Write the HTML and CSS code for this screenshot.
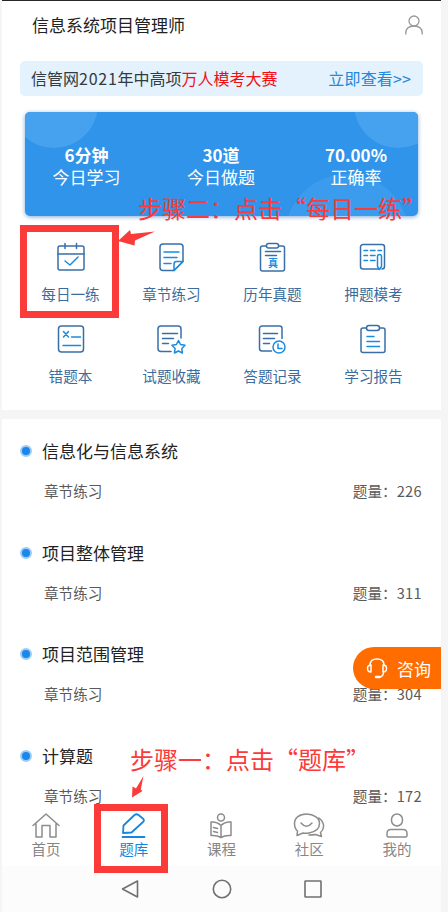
FILE: index.html
```html
<!DOCTYPE html>
<html lang="zh-CN">
<head>
<meta charset="utf-8">
<title>信息系统项目管理师</title>
<link rel="stylesheet" href="styles.css">
</head>
<body>
<div class="phone">
  <header class="header">
    <h1>信息系统项目管理师</h1>
    <svg class="user" width="20" height="20" viewBox="0 0 20 20"><circle cx="10" cy="6" r="5"/><path d="M1.800 19v-1Q2 11 10 11t8.200 7v1"/></svg>
  </header>
  <div class="banner"><span>信管网<i>2021</i>年中高项<b>万人模考大赛</b></span><a>立即查看&gt;&gt;</a></div>
  <section class="stats">
    <svg class="bubbles" width="393" height="104" viewBox="0 0 393 104"><circle cx="29" cy="-8" r="44"/><circle cx="373" cy="-8" r="44"/><circle cx="322" cy="124" r="62" opacity=".55"/></svg>
    <div><strong>6分钟</strong><span>今日学习</span></div>
    <div><strong>30道</strong><span>今日做题</span></div>
    <div><strong>70.00%</strong><span>正确率</span></div>
  </section>
  <nav class="tools">
    <div><svg width="30" height="32" viewBox="0 0 30 32"><rect x="2" y="4" width="26" height="24" rx="2"/><path d="M2 12h26M9 1.500v5M20.500 1.500v5"/><path class="hi" d="m9 19 5 4 8-8"/></svg><span>每日一练</span></div>
    <div><svg width="30" height="32" viewBox="0 0 30 32"><path d="M17 28.500H6a3 3 0 0 1-3-3V5a3 3 0 0 1 3-3h17a3 3 0 0 1 3 3v14.500z"/><path class="hi" d="M7 10h15M7 15.500h13M7 21.500h7M17 28.500V22q0-2.500 2.500-2.500H26z"/></svg><span>章节练习</span></div>
    <div><svg width="30" height="32" viewBox="0 0 30 32"><rect x="2.500" y="4" width="24" height="25" rx="2"/><rect class="paper" x="8.500" y="1.500" width="12" height="4.500" rx="2"/><path d="M7.500 9.500h15M7.500 13.500h11"/><text x="15" y="25">真</text></svg><span>历年真题</span></div>
    <div><svg width="30" height="32" viewBox="0 0 30 32"><path d="M20 27H4a2.500 2.500 0 0 1-2.500-2.500V5A2.500 2.500 0 0 1 4 2.500h19A2.500 2.500 0 0 1 25.500 5v19.500q0 2.500-2.500 2.500"/><path class="hi" d="M5 8.500h3.500M11.500 8.500h4.500M19 8.500h3.500M5 13.500h3.500M11.500 13.500h4.500M5 18.500h3.500M11.500 18.500h4.500M18.500 24.500v-10q0-2 2-2t2 2v10l-2 3z"/></svg><span>押题模考</span></div>
    <div><svg width="30" height="32" viewBox="0 0 30 32"><rect x="2.500" y="2" width="25" height="26" rx="3"/><path class="hi" d="m7.500 7.500 5 5.500m0-5.500-5 5.500M15.500 13h9M7 21.500h17.500"/></svg><span>错题本</span></div>
    <div><svg width="30" height="32" viewBox="0 0 30 32"><path d="M14 27.500H4a3 3 0 0 1-3-3V5a3 3 0 0 1 3-3h17a3 3 0 0 1 3 3v9M5.500 9.500h15M5.500 14.500h11M5.500 19.500h6"/><path class="hi" d="m21.500 16.500 2 4 4.500.8-3.200 3.200.6 4.500-4-2-4 2 .7-4.500-3.200-3.200 4.500-.8z"/></svg><span>试题收藏</span></div>
    <div><svg width="30" height="32" viewBox="0 0 30 32"><path d="M13.500 27H4a2.500 2.500 0 0 1-2.500-2.500V4.500A2.500 2.500 0 0 1 4 2h17.500A2.500 2.500 0 0 1 24 4.500v10M5.500 9.500h14M5.500 14.500h11M5.500 19.500h6"/><circle class="hi" cx="21" cy="23" r="6"/><path class="hi" d="M20 20v4.500h4"/></svg><span>答题记录</span></div>
    <div><svg width="30" height="32" viewBox="0 0 30 32"><rect x="2" y="4" width="24" height="24.500" rx="2"/><rect class="paper" x="7.500" y="1.500" width="13" height="5" rx="2.500"/><path class="hi" d="M8 12.500h7M8 17.500h12.500M8 22.500h12.500"/></svg><span>学习报告</span></div>
  </nav>
  <main class="list">
    <article><h2>信息化与信息系统</h2><p><span>章节练习</span><span>题量：<i>226</i></span></p></article>
    <article><h2>项目整体管理</h2><p><span>章节练习</span><span>题量：<i>311</i></span></p></article>
    <article><h2>项目范围管理</h2><p><span>章节练习</span><span>题量：<i>304</i></span></p></article>
    <article><h2>计算题</h2><p><span>章节练习</span><span>题量：<i>172</i></span></p></article>
  </main>
  <nav class="tabs">
    <div><svg width="32" height="28" viewBox="0 0 32 28"><path d="M3 13.500 16 2l13 11.500M6 11.500V25h6V13.500h8V25h6V11.500"/></svg><span>首页</span></div>
    <div class="active"><svg width="32" height="28" viewBox="0 0 32 28"><path d="m5.500 13.500 11-10.500q2-1.500 4 0l5 4q1 1.500-.5 3L13.500 20.500l-8.500.5zM4.500 25h22"/></svg><span>题库</span></div>
    <div><svg width="32" height="28" viewBox="0 0 32 28"><circle cx="16" cy="5.500" r="3.500"/><path d="M16 13.500q-4-4-10-3.500v13.500q6-.5 10 2 4-2.500 10-2V10q-6-.5-10 3.500zM16 13.500v12M8.500 15.500l4 1M8.500 19.500l4 1"/></svg><span>课程</span></div>
    <div><svg width="32" height="28" viewBox="0 0 32 28"><path d="M13.500 2C6.500 2 1.500 6 1.500 11.500q0 5 3 7.500l-.5 4.500 6-2.500q3 .5 6 0c6-1 10.500-4 10.500-9.500C26.500 6 20.500 2 13.500 2zM8 11q5.500 6.500 11 0M26 6q5 4 4.500 9-.5 3.500-3 5.500l1 4-6-2q-3 .5-6.500.5"/></svg><span>社区</span></div>
    <div><svg width="32" height="28" viewBox="0 0 32 28"><rect x="10.500" y="2" width="11" height="12" rx="5.500"/><path d="M10 17.500h12q4 0 4 4v2q0 1.500-1.500 1.500h-17Q6 25 6 23.500v-2q0-4 4-4z"/></svg><span>我的</span></div>
  </nav>
  <footer class="system">
    <svg width="20" height="20" viewBox="0 0 20 20"><path d="M17.500 2v16L2.500 10z"/></svg>
    <svg width="20" height="20" viewBox="0 0 20 20"><circle cx="10" cy="10" r="8.700"/></svg>
    <svg width="20" height="20" viewBox="0 0 20 20"><rect x="2" y="2" width="16" height="16" rx=".5"/></svg>
  </footer>
  <button class="consult"><svg width="22" height="22" viewBox="0 0 22 22"><path d="M4 8.500V8q0-6 7-6t7 6v.5M5 8v7q-3.500 0-3.500-3.500T5 8zM17 8v7q3.500 0 3.500-3.500T17 8zM17.500 15q0 4.500-4 5"/><path class="mic" d="M10 20h3.500"/></svg>咨询</button>
  <div class="mark mark-daily"></div>
  <div class="mark mark-bank"></div>
  <div class="note note-two">步骤二：点击“每日一练”</div>
  <div class="note note-one">步骤一：点击“题库”</div>
  <svg class="arrow arrow-two" width="38" height="16" viewBox="0 0 38 16"><path d="M0 11 12 0l1 4 24-2.500-20 9-.500 5z"/></svg>
  <svg class="arrow arrow-one" width="14" height="22" viewBox="0 0 14 22"><path d="M11.500 0 8.800 13.500 10.500 15 0 21.500.500 10.500 4 12.500z"/></svg>
</div>
</body>
</html>
```
FILE: styles.css
```css
*, ::before { box-sizing: border-box; }
body {
  margin: 0;
  background: #f5f5f5;
  font-family: "Noto Sans CJK SC", sans-serif;
  white-space: nowrap;
}
h1, h2, p { margin: 0; font-weight: 400; }
i { font-style: normal; }
svg { display: block; fill: none; stroke-linecap: round; stroke-linejoin: round; }
.phone {
  position: relative;
  width: 439px;
  height: 912px;
  margin-left: 2px;
  display: flex;
  flex-direction: column;
  background: #fff;
  border-top: 1px solid #28282c;
  overflow: hidden;
}
.header {
  height: 60px;
  padding: 11px 17px 0 30px;
  display: flex;
  justify-content: space-between;
}
.header h1 { font-size: 17px; line-height: 26px; color: #222; }
.user { margin-top: 3px; stroke: #999; stroke-width: 1.3; }
.banner {
  height: 35px;
  margin: 0 18px;
  padding: 0 12px 0 11px;
  display: flex;
  justify-content: space-between;
  border-radius: 5px;
  background: #e4f2fd;
  font-size: 16px;
  line-height: 35px;
  color: #333a40;
}
.banner i { letter-spacing: .75px; }
.banner b { font-weight: 400; color: #f20d12; }
.banner a { color: #2487d9; letter-spacing: .15px; }
.stats {
  position: relative;
  height: 104px;
  margin: 16px 23px 0;
  padding: 32px 0 0;
  display: grid;
  grid-template-columns: 123px 146px 124px;
  border-radius: 5px;
  background: #2f94ea;
  box-shadow: 0 1px 4px #2f72bb99;
  color: #fff;
  text-align: center;
}
.stats div { position: relative; line-height: 22px; font-size: 17px; }
.stats strong, .stats span { display: block; }
.bubbles { position: absolute; inset: 0; fill: #46a2ee; border-radius: 5px; }
.tools {
  height: 194px;
  padding: 26px 17px 0 18px;
  display: grid;
  grid-template-columns: repeat(4, 101px);
  grid-template-rows: 82px 82px;
}
.tools div, .tabs div { display: flex; flex-direction: column; align-items: center; }
.tools svg { stroke: #396fa7; stroke-width: 1.5; }
.tools .hi { stroke: #198be1; }
.tools .paper { fill: #fff; }
.tools text { fill: #198be1; stroke: none; font-size: 10px; font-weight: 700; text-anchor: middle; }
.tools span { margin-top: 9px; font-size: 14.6px; line-height: 22px; color: #3c6c9d; }
.list {
  height: 394px;
  padding: 19px 19px 0 18px;
  border-top: 9px solid #f5f5f5;
}
.list article { height: 101.7px; }
.list h2 {
  display: flex;
  align-items: center;
  gap: 10px;
  font-size: 17px;
  line-height: 26px;
  color: #222;
}
.list h2::before {
  content: "";
  width: 12px;
  height: 12px;
  border: 2px solid #9bccf7;
  border-radius: 50%;
  background: #1b86eb;
}
.list p {
  margin-top: 16px;
  padding-left: 24px;
  display: flex;
  justify-content: space-between;
  font-size: 14.6px;
  line-height: 22px;
  color: #5a5a5a;
}
.list i { letter-spacing: .35px; }
.tabs {
  height: 62px;
  padding-top: 8px;
  display: grid;
  grid-template-columns: repeat(5, 1fr);
  color: #868686;
}
.tabs svg { stroke: #8c8c8c; stroke-width: 1.5; }
.tabs span { margin-top: -2px; font-size: 14.5px; line-height: 22px; }
.tabs .active { color: #1985dc; }
.tabs .active svg { stroke: #1985dc; stroke-width: 1.8; }
.system {
  height: 46px;
  padding-top: 13px;
  display: flex;
  justify-content: center;
  gap: 71.500px;
  background: #fcfcfc;
}
.system svg { stroke: #707070; stroke-width: 1.6; }
.consult {
  position: absolute;
  left: 351px;
  top: 646px;
  width: 88px;
  height: 42px;
  padding: 0 0 0 13px;
  display: flex;
  align-items: center;
  gap: 9px;
  border: 0;
  border-radius: 21px 0 0 21px;
  background: #ff6c00;
  color: #fff;
  font: 17px "Noto Sans CJK SC", sans-serif;
}
.consult svg { stroke: #fff; stroke-width: 1.5; }
.consult .mic { stroke-width: 2.5; }
.mark { position: absolute; border: 7px solid #fb3a3a; }
.mark-daily { left: 18px; top: 224px; width: 99px; height: 93px; }
.mark-bank { left: 92px; top: 803px; width: 74px; height: 69px; }
.note { position: absolute; font-size: 24px; line-height: 32px; color: #fb3a3a; }
.note-two { left: 136px; top: 191px; }
.note-one { left: 128px; top: 742px; }
.arrow { position: absolute; fill: #fb3a3a; }
.arrow-two { left: 116px; top: 229px; }
.arrow-one { left: 130px; top: 775px; }
```
